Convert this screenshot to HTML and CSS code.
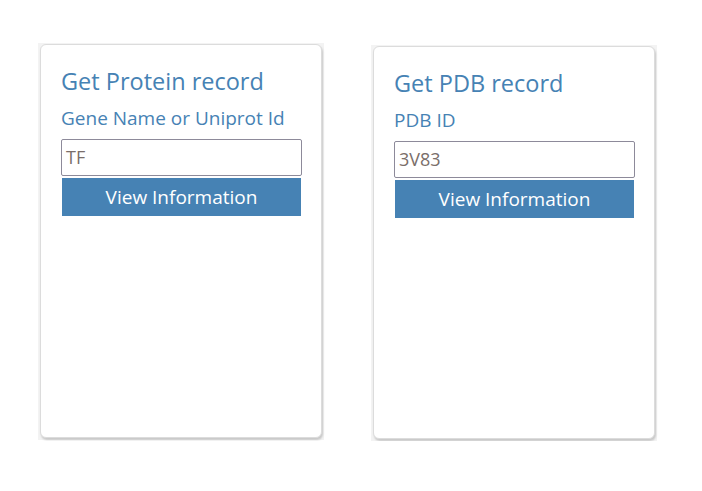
FILE: index.html
```html
<!DOCTYPE html>
<html>
<head>
<meta charset="utf-8">
<link rel="stylesheet" href="styles.css">
</head>
<body>
<div class="row">
  <div class="shell shell-left">
    <div class="card">
      <h2 class="title">Get Protein record</h2>
      <div class="label">Gene Name or Uniprot Id</div>
      <div class="field">TF</div>
      <button class="btn">View Information</button>
    </div>
  </div>
  <div class="shell shell-right">
    <div class="card">
      <h2 class="title">Get PDB record</h2>
      <div class="label">PDB ID</div>
      <div class="field">3V83</div>
      <button class="btn">View Information</button>
    </div>
  </div>
</div>
</body>
</html>
```
FILE: styles.css
```css
html, body {
  margin: 0;
  padding: 0;
  background: #ffffff;
  font-family: "Open Sans", "Noto Sans", sans-serif;
}
.row {
  display: flex;
  align-items: flex-start;
  gap: 47px;
  padding: 43px 0 0 38px;
}
.shell {
  background: #f3f3f3;
  padding: 1px 2px 2px 2px;
  box-sizing: border-box;
  width: 286px;
}
.shell-left { height: 397px; }
.shell-right { height: 396px; margin-top: 2px; }
.card {
  height: 100%;
  box-sizing: border-box;
  background: #ffffff;
  border: 1px solid #dcdcdc;
  border-radius: 6px;
  box-shadow: 1px 2px 2px #c8c8c8;
  padding: 20px 0 0 20px;
}
.title {
  margin: 0;
  font-weight: 400;
  font-size: 23.5px;
  line-height: 32px;
  color: #4682b4;
}
.label {
  margin-top: 8px;
  font-size: 19px;
  line-height: 26px;
  color: #4682b4;
}
.field {
  margin-top: 8px;
  width: 241px;
  height: 37px;
  box-sizing: border-box;
  border: 1px solid #8d8a9a;
  border-radius: 2px;
  padding: 5px 4px;
  font-size: 18px;
  line-height: 25px;
  color: #7a6e6a;
}
.btn {
  display: block;
  margin: 2px 0 0 1px;
  width: 239px;
  height: 38px;
  border: none;
  background: #4682b4;
  color: #ffffff;
  font-family: inherit;
  font-size: 19px;
  padding: 0;
}
```
